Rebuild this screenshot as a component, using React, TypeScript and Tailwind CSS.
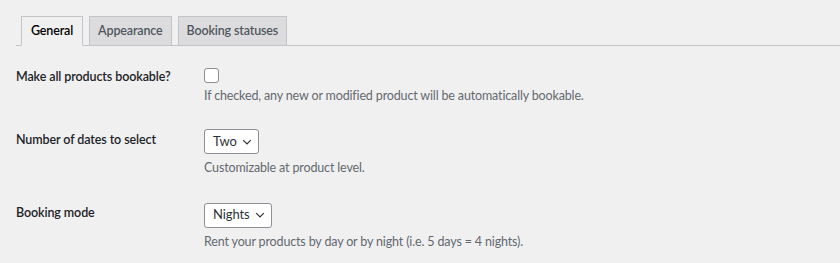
import React from 'react';

const font = { fontFamily: 'Lato, "Noto Sans", sans-serif' };

function Chevron() {
  return (
    <svg width="10" height="10" viewBox="0 0 10 10" className="ml-[5px]">
      <polyline points="1.2,3.2 5,7 8.8,3.2" fill="none" stroke="#2c3338" strokeWidth="1.2" />
    </svg>
  );
}

function Select({ value }: { value: string }) {
  return (
    <div className="inline-flex h-[25px] items-center rounded-[3px] border border-[#8c8f94] bg-white pl-[8px] pr-[6px] text-[13px] tracking-[-0.1px] text-[#2c3338]">
      {value}
      <Chevron />
    </div>
  );
}

export default function App() {
  const tabs = ['General', 'Appearance', 'Booking statuses'];
  return (
    <div className="h-[263px] w-[840px] overflow-hidden bg-[#f0f0f1] text-[#1d2327]" style={font}>
      <div className="ml-4 flex items-end gap-[6px] border-b border-[#c3c4c7] pl-[5px] pt-4">
        {tabs.map((t, i) => (
          <div
            key={t}
            className={
              i === 0
                ? '-mb-px flex h-[30px] items-center border border-b-[#f0f0f1] border-[#c3c4c7] bg-[#f0f0f1] px-[9px] text-[12.5px] font-semibold tracking-[-0.15px] text-black'
                : 'flex h-[29px] items-center border border-[#c3c4c7] border-b-0 bg-[#dcdcde] px-[8px] text-[12.5px] font-semibold tracking-[-0.15px] text-[#50575e]'
            }
          >
            {t}
          </div>
        ))}
      </div>

      <div className="pl-4">
        <div className="flex pt-[21px]">
          <div className="w-[188px] text-[12.5px] font-semibold leading-5 tracking-[-0.1px]">Make all products bookable?</div>
          <div>
            <div className="mt-[1px] h-[15px] w-[15px] rounded-[3px] border border-[#8c8f94] bg-white" />
            <div className="mt-[3px] text-[12.5px] leading-5 tracking-[-0.15px] text-[#646970]">
              If checked, any new or modified product will be automatically bookable.
            </div>
          </div>
        </div>

        <div className="flex pt-[22px]">
          <div className="mt-[2px] w-[188px] text-[12.5px] font-semibold leading-5 tracking-[-0.1px]">Number of dates to select</div>
          <div>
            <Select value="Two" />
            <div className="mt-[4px] text-[12.5px] leading-5 tracking-[-0.15px] text-[#646970]">Customizable at product level.</div>
          </div>
        </div>

        <div className="flex pt-[23px]">
          <div className="mt-[2px] w-[188px] text-[12.5px] font-semibold leading-5 tracking-[-0.1px]">Booking mode</div>
          <div>
            <Select value="Nights" />
            <div className="mt-[4px] text-[12.5px] leading-5 tracking-[-0.15px] text-[#646970]">
              Rent your products by day or by night (i.e. 5 days = 4 nights).
            </div>
          </div>
        </div>
      </div>
    </div>
  );
}
